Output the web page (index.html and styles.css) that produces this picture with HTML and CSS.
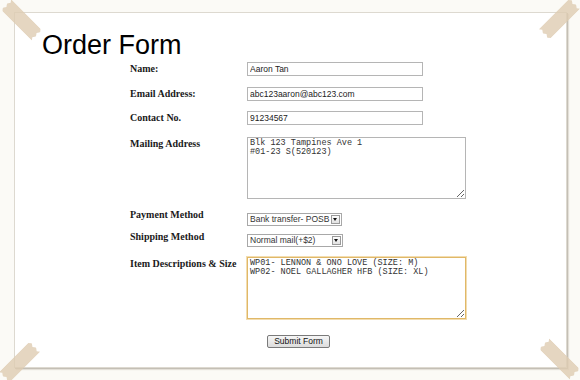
FILE: index.html
```
<!DOCTYPE html>
<html lang="en">
<head>
<meta charset="UTF-8">
<title>Order Form</title>
<link rel="stylesheet" href="styles.css">
</head>
<body>
<div class="paper">
    <div class="tape tape-tl"></div>
    <div class="tape tape-tr"></div>
    <div class="tape tape-bl"></div>
    <div class="tape tape-br"></div>

    <h1>Order Form</h1>

    <form class="order-form">
        <div class="row">
            <label for="name">Name:</label>
            <input type="text" id="name" value="Aaron Tan">
        </div>
        <div class="row row-email">
            <label for="email">Email Address:</label>
            <input type="text" id="email" value="abc123aaron@abc123.com">
        </div>
        <div class="row row-contact">
            <label for="contact">Contact No.</label>
            <input type="text" id="contact" value="91234567">
        </div>
        <div class="row row-address">
            <label for="address">Mailing Address</label>
            <textarea id="address" spellcheck="false">Blk 123 Tampines Ave 1
#01-23 S(520123)</textarea>
        </div>
        <div class="row row-payment">
            <label for="payment">Payment Method</label>
            <div class="select-wrap payment">
                <select id="payment">
                    <option>Bank transfer- POSB</option>
                    <option>Cash on delivery</option>
                </select>
                <span class="arrow"></span>
            </div>
        </div>
        <div class="row row-shipping">
            <label for="shipping">Shipping Method</label>
            <div class="select-wrap shipping">
                <select id="shipping">
                    <option>Normal mail(+$2)</option>
                    <option>Registered mail(+$4)</option>
                </select>
                <span class="arrow"></span>
            </div>
        </div>
        <div class="row row-items">
            <label for="items">Item Descriptions &amp; Size</label>
            <textarea id="items" class="focused" spellcheck="false">WP01- LENNON &amp; ONO LOVE (SIZE: M)
WP02- NOEL GALLAGHER HFB (SIZE: XL)</textarea>
        </div>
        <div class="submit-row">
            <button type="button">Submit Form</button>
        </div>
    </form>
</div>
</body>
</html>
```

FILE: styles.css
```
    body {
        margin: 0;
        background-color: #fbfaf6; /* off-white desk */
        font-family: "Liberation Serif", serif;
        width: 580px;
        height: 380px;
        overflow: hidden;
    }
    .paper {
        position: relative; /* for the tape pieces */
        box-sizing: border-box;
        margin: 12px 0 0 14px;
        width: 553px;
        height: 356px;
        background-color: #ffffff;
        border: 1px solid #ddd9d0;
        box-shadow: 1px 1px 0 #c4bfb5, 2px 2px 1px #e4e0d8;
    }
    h1 {
        margin: 17px 0 0 27px;
        font-family: "Liberation Sans", Arial, sans-serif;
        font-weight: normal;
        font-size: 27px;
        line-height: 30px;
        color: #000000;
    }
    .order-form {
        margin: 2px 0 0 115px;
    }
    .row {
        display: flex;
        align-items: flex-start;
    }
    .row label {
        width: 117px;
        font-weight: bold;
        font-size: 10px;
        line-height: 14px;
        color: #1a1a1a;
    }
    .row-email { margin-top: 11px; }
    .row-contact { margin-top: 10px; }
    .row-address { margin-top: 12px; }
    .row-payment { margin-top: 9px; }
    .row-shipping { margin-top: 4px; }
    .row-items { margin-top: 10px; }

    input[type="text"] {
        box-sizing: border-box;
        width: 176px;
        height: 14px;
        margin: 0;
        padding: 0 2px;
        border: 1px solid #b5b5b5;
        font-family: "Liberation Sans", Arial, sans-serif;
        font-size: 8.5px;
        color: #222222;
        outline: none;
    }
    textarea {
        display: block;
        box-sizing: border-box;
        width: 219px;
        height: 62px;
        margin: 0;
        padding: 1px 2px;
        border: 1px solid #b5b5b5;
        font-family: "Liberation Mono", "Courier New", monospace;
        font-size: 8.5px;
        line-height: 9px;
        color: #333333;
        outline: none;
    }
    textarea.focused {
        border-color: #e0b868;
        box-shadow: 0 0 0 1px #f3ddb0;
    }
    .select-wrap {
        position: relative;
        height: 13px;
    }
    .row-payment .select-wrap { margin-top: 5px; }
    .row-shipping .select-wrap { margin-top: 4px; }
    .select-wrap.payment { width: 95px; }
    .select-wrap.shipping { width: 96px; }
    select {
        display: block;
        appearance: none;
        box-sizing: border-box;
        width: 100%;
        height: 13px;
        margin: 0;
        padding: 0 0 0 2px;
        border: 1px solid #a8a8a8;
        border-radius: 0;
        background-color: #ffffff;
        font-family: "Liberation Sans", Arial, sans-serif;
        font-size: 8.5px;
        line-height: 11px;
        color: #333333;
        outline: none;
    }
    .arrow {
        position: absolute;
        top: 2px;
        right: 2px;
        width: 7px;
        height: 7px;
        border: 1px solid #9a9a9a;
        background: linear-gradient(#fdfdfd, #e2e2e2);
        pointer-events: none;
    }
    .arrow::after {
        content: "";
        position: absolute;
        left: 1px;
        top: 2px;
        border-left: 2.5px solid transparent;
        border-right: 2.5px solid transparent;
        border-top: 3px solid #111111;
    }
    .submit-row {
        margin: 11px 0 0 137px;
    }
    button {
        box-sizing: border-box;
        width: 63px;
        height: 13px;
        padding: 0;
        border: 1px solid #7a7a7a;
        border-radius: 2px;
        background: linear-gradient(#f6f6f6, #dcdcdc);
        font-family: "Liberation Sans", Arial, sans-serif;
        font-size: 8.5px;
        line-height: 11px;
        color: #111111;
        cursor: pointer;
    }

    /* tape pieces on the corners */
    .tape {
        position: absolute;
        width: 15px;
        height: 44px;
        background-color: rgba(222, 204, 178, 0.8);
        clip-path: polygon(0 6%, 20% 0, 40% 5%, 60% 0, 80% 5%, 100% 0, 100% 94%, 80% 100%, 60% 95%, 40% 100%, 20% 95%, 0 100%);
    }
    .tape-tl {
        left: -1px;
        top: -15px;
        transform: rotate(-45deg);
    }
    .tape-tr {
        left: 537px;
        top: -16px;
        transform: rotate(45deg);
    }
    .tape-bl {
        left: -3px;
        top: 327px;
        transform: rotate(45deg);
    }
    .tape-br {
        left: 537px;
        top: 324px;
        transform: rotate(-45deg);
    }
```
